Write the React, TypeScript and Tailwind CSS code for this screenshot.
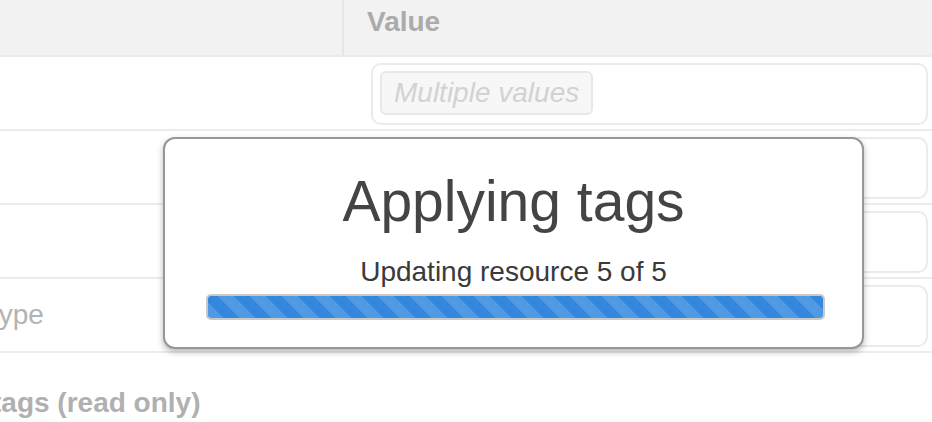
import React from "react";

const rows = [
  { label: "", tag: "Multiple values" },
  { label: "", tag: "" },
  { label: "", tag: "" },
  { label: "type", tag: "" },
];

export default function App() {
  return (
    <div className="relative h-[422px] w-[932px] overflow-hidden bg-white font-['Liberation_Sans',Arial,sans-serif]">
      <div className="flex h-[57px] border-b-2 border-[#ebebeb] bg-[#f2f2f2]">
        <div className="w-[344px] border-r-2 border-[#e6e6e6]" />
        <div className="flex-1 pl-[23px] pt-[8px] text-[28px] font-bold leading-none text-[#ababab]">Value</div>
      </div>

      {rows.map((row, i) => (
        <div key={i} className="flex h-[74px] border-b-2 border-[#ececec]">
          <div className="flex w-[346px] items-center overflow-hidden">
            {row.label && (
              <span className="-ml-[9px] text-[28px] leading-none text-[#b3b3b3]">{row.label}</span>
            )}
          </div>
          <div className="flex-1 pb-[4px] pl-[25px] pr-[4px] pt-[6px]">
            <div className="h-full rounded-[10px] border-2 border-[#ebebeb] pl-[7px] pt-[6px]">
              {row.tag && (
                <span className="inline-flex h-[44px] items-center rounded-[6px] border-2 border-[#e8e8e8] bg-[#f7f7f7] px-[12px] text-[28px] italic leading-none text-[#d2d2d2]">
                  {row.tag}
                </span>
              )}
            </div>
          </div>
        </div>
      ))}

      <div className="-ml-[8px] mt-[36px] text-[28px] font-bold leading-none text-[#b0b0b0]">tags (read only)</div>

      <div className="absolute left-[163px] top-[137px] flex h-[212px] w-[701px] flex-col items-center rounded-[12px] border-2 border-[#979797] bg-white px-[41px] pt-[34px] shadow-[0_3px_6px_rgba(0,0,0,0.28)]">
        <div className="text-[57px] leading-none text-[#444444]">Applying tags</div>
        <div className="mt-[28px] text-[28px] leading-none text-[#3a3a3a]">Updating resource 5 of 5</div>
        <div className="ml-[4px] mt-[8px] h-[26px] w-[619px] rounded-[5px] border-2 border-[#c9c9c9] bg-[#eeeeee]">
          <div className="h-full w-full rounded-[3px] bg-[repeating-linear-gradient(45deg,#5199e3_0px,#5199e3_11.3px,#3387dc_11.3px,#3387dc_22.6px)]" />
        </div>
      </div>
    </div>
  );
}
